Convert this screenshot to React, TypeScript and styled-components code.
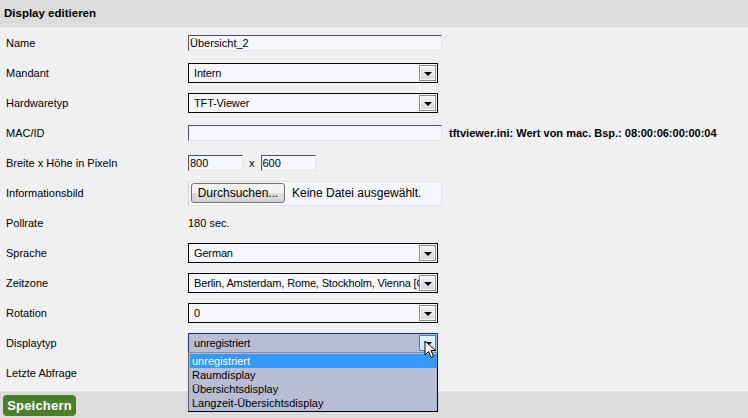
import React from 'react';
import styled, { createGlobalStyle } from 'styled-components';

const GlobalStyle = createGlobalStyle`
  html, body {
    margin: 0;
    padding: 0;
    background: #f0f0f0;
    font-family: 'Liberation Sans', Arial, sans-serif;
    font-size: 11px;
    color: #000;
  }
`;

const Page = styled.div`
  width: 748px;
  height: 418px;
  display: flex;
  flex-direction: column;
  overflow: hidden;
`;

const Header = styled.div`
  height: 27px;
  background: #dcdcdc;
  display: flex;
  align-items: center;
  padding-left: 4px;
  font-weight: bold;
  font-size: 11.5px;
  box-sizing: border-box;
  padding-bottom: 2px;
`;

const Form = styled.div`
  flex: 1;
  padding-top: 1px;
  display: flex;
  flex-direction: column;
`;

const Row = styled.div`
  height: 30px;
  display: grid;
  grid-template-columns: 188px 1fr;
  align-items: center;
`;

const Label = styled.div`
  padding-left: 6px;
`;

const Control = styled.div`
  display: flex;
  align-items: center;
  gap: 7px;
  position: relative;
`;

const TextInput = styled.div<{ $w: number }>`
  width: ${p => p.$w}px;
  height: 16px;
  box-sizing: border-box;
  background: #f6f7fc;
  border-top: 1px solid #4c4c66;
  border-left: 1px solid #4c4c66;
  border-right: 1px solid #e4e4e8;
  border-bottom: 1px solid #e4e4e8;
  padding-left: 1px;
  line-height: 14px;
  font-size: 11px;
  white-space: nowrap;
  overflow: hidden;
`;

const SelectBox = styled.div<{ $open?: boolean }>`
  width: 250px;
  height: 20px;
  box-sizing: border-box;
  border: 1px solid ${p => (p.$open ? '#1c2d6e' : '#000')};
  background: ${p => (p.$open ? '#b8bdd3' : '#f6f7fc')};
  display: flex;
  align-items: center;
  padding-left: 5px;
  position: relative;
`;

const SelectText = styled.span`
  flex: 1;
  min-width: 0;
  white-space: nowrap;
  overflow: hidden;
  text-overflow: clip;
  letter-spacing: -0.15px;
  padding-right: 1px;
`;

const ArrowButton = styled.div<{ $hover?: boolean }>`
  width: 17px;
  height: 16px;
  margin-right: 1px;
  box-sizing: border-box;
  flex-shrink: 0;
  border: 1px solid ${p => (p.$hover ? '#3c7fb1' : '#8a8a8a')};
  background: ${p =>
    p.$hover
      ? 'linear-gradient(#eaf6fd, #bee6fd)'
      : 'linear-gradient(#f4f4f4, #d4d4d4)'};
  display: flex;
  align-items: center;
  justify-content: center;
  box-shadow: inset 0 0 0 1px ${p => (p.$hover ? '#e3f4fc' : '#fafafa')};
`;

const Triangle = styled.div`
  width: 0;
  height: 0;
  border-left: 4px solid transparent;
  border-right: 4px solid transparent;
  border-top: 4px solid #000;
  margin-top: 1px;
`;

const Hint = styled.span`
  font-weight: bold;
  white-space: nowrap;
`;

const Times = styled.span`
  margin: 0 -1px;
`;

const FileBox = styled.div`
  width: 254px;
  height: 25px;
  box-sizing: border-box;
  background: #f6f7fc;
  border: 1px solid #e2e2ea;
  border-left-color: #d0d0dc;
  display: flex;
  align-items: center;
  padding-left: 2px;
  gap: 7px;
`;

const FileButton = styled.div`
  height: 20px;
  width: 94px;
  box-sizing: border-box;
  border: 1px solid #707070;
  border-radius: 3px;
  background: linear-gradient(#f2f2f2 50%, #dedede 50%, #d4d4d4);
  display: flex;
  align-items: center;
  justify-content: center;
  font-size: 12px;
`;

const FileInfo = styled.span`
  font-size: 12px;
`;

const List = styled.div`
  position: absolute;
  left: 0;
  top: 19px;
  width: 250px;
  box-sizing: border-box;
  background: #b8bdd3;
  border: 1px solid #000;
  border-left-color: #5a5a5a;
  border-top: 1px solid #8a8a9a;
  padding: 1px 0 1px 1px;
  z-index: 2;
`;

const ListItem = styled.div<{ $active?: boolean }>`
  height: 14px;
  line-height: 14px;
  padding-left: 2px;
  background: ${p => (p.$active ? '#3399ff' : 'transparent')};
  color: ${p => (p.$active ? '#fff' : '#000')};
`;

const Cursor = styled.svg`
  position: absolute;
  left: 236px;
  top: 7px;
  z-index: 3;
`;

const Footer = styled.div`
  height: 28px;
  background: #dcdcdc;
  border-top: 1px solid #fafafa;
  display: flex;
  align-items: center;
  padding-left: 3px;
  box-sizing: border-box;
`;

const SaveButton = styled.div`
  background: #4b7e2a;
  color: #fff;
  font-weight: bold;
  font-size: 13px;
  border-radius: 4px;
  height: 21px;
  width: 73px;
  display: flex;
  align-items: center;
  justify-content: center;
  margin-top: 2px;
  letter-spacing: 0.2px;
`;

const Select = ({ value, open }: { value: string; open?: boolean }) => (
  <SelectBox $open={open}>
    <SelectText>{value}</SelectText>
    <ArrowButton $hover={open}>
      <Triangle />
    </ArrowButton>
  </SelectBox>
);

const typeOptions = ['unregistriert', 'Raumdisplay', 'Übersichtsdisplay', 'Langzeit-Übersichtsdisplay'];

export default function App() {
  return (
    <Page>
      <GlobalStyle />
      <Header>Display editieren</Header>
      <Form>
        <Row>
          <Label>Name</Label>
          <Control>
            <TextInput $w={254}>Übersicht_2</TextInput>
          </Control>
        </Row>
        <Row>
          <Label>Mandant</Label>
          <Control>
            <Select value="Intern" />
          </Control>
        </Row>
        <Row>
          <Label>Hardwaretyp</Label>
          <Control>
            <Select value="TFT-Viewer" />
          </Control>
        </Row>
        <Row>
          <Label>MAC/ID</Label>
          <Control>
            <TextInput $w={254} />
            <Hint>tftviewer.ini: Wert von mac. Bsp.: 08:00:06:00:00:04</Hint>
          </Control>
        </Row>
        <Row>
          <Label>Breite x Höhe in Pixeln</Label>
          <Control>
            <TextInput $w={55}>800</TextInput>
            <Times>x</Times>
            <TextInput $w={55}>600</TextInput>
          </Control>
        </Row>
        <Row>
          <Label>Informationsbild</Label>
          <Control>
            <FileBox>
              <FileButton>Durchsuchen...</FileButton>
              <FileInfo>Keine Datei ausgewählt.</FileInfo>
            </FileBox>
          </Control>
        </Row>
        <Row>
          <Label>Pollrate</Label>
          <Control>180 sec.</Control>
        </Row>
        <Row>
          <Label>Sprache</Label>
          <Control>
            <Select value="German" />
          </Control>
        </Row>
        <Row>
          <Label>Zeitzone</Label>
          <Control>
            <Select value="Berlin, Amsterdam, Rome, Stockholm, Vienna [GMT+1]" />
          </Control>
        </Row>
        <Row>
          <Label>Rotation</Label>
          <Control>
            <Select value="0" />
          </Control>
        </Row>
        <Row>
          <Label>Displaytyp</Label>
          <Control>
            <Select value="unregistriert" open />
            <List>
              {typeOptions.map((o, i) => (
                <ListItem key={o} $active={i === 0}>
                  {o}
                </ListItem>
              ))}
            </List>
            <Cursor width="13" height="20" viewBox="0 0 13 20">
              <path
                d="M1 1 L1 15 L4.5 11.5 L7 17.5 L9.5 16.5 L7 10.5 L11.5 10.5 Z"
                fill="#fff"
                stroke="#000"
                strokeWidth="1"
                strokeLinejoin="round"
              />
            </Cursor>
          </Control>
        </Row>
        <Row>
          <Label>Letzte Abfrage</Label>
          <Control />
        </Row>
      </Form>
      <Footer>
        <SaveButton>Speichern</SaveButton>
      </Footer>
    </Page>
  );
}
